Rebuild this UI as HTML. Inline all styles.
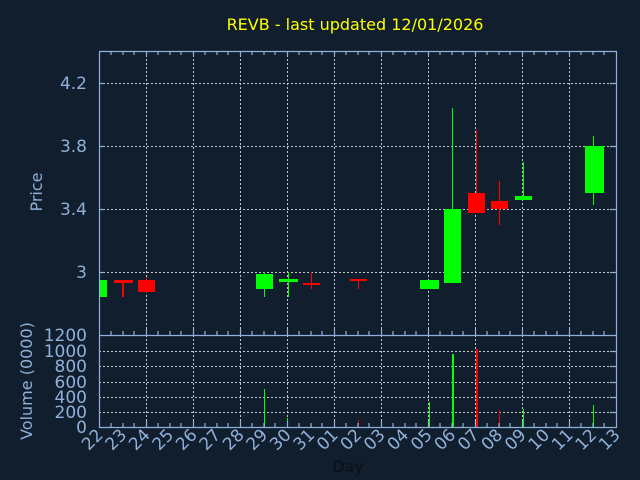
<!DOCTYPE html>
<html><head><meta charset="utf-8"><style>
html,body{margin:0;padding:0;background:#111e2e;}
svg{display:block}
text{font-family:"DejaVu Sans","Liberation Sans",sans-serif;}
</style></head><body>
<svg width="640" height="480" viewBox="0 0 640 480" xmlns="http://www.w3.org/2000/svg">
<rect width="640" height="480" fill="#111e2e"/>
<text x="355" y="30" fill="#ffff00" font-size="16" text-anchor="middle">REVB - last updated 12/01/2026</text>
<g stroke="#c8c8c8" stroke-width="1" stroke-dasharray="2,2" fill="none">
<path d="M146.5 51V427M193.5 51V427M240.5 51V427M287.5 51V427M334.5 51V427M381.5 51V427M428.5 51V427M475.5 51V427M522.5 51V427M569.5 51V427"/>
<path d="M99 83.5H616M99 146.5H616M99 209.5H616M99 272.5H616"/>
<path d="M99 351.5H616M99 366.5H616M99 382.5H616M99 397.5H616M99 412.5H616"/>
</g>
<g>
<rect x="99" y="280" width="8" height="17" fill="#00ff00"/>
<rect x="122" y="280" width="2" height="17" fill="#ff0000"/><rect x="114" y="280" width="19" height="3" fill="#ff0000"/>
<rect x="146" y="277" width="1" height="16" fill="#ff0000"/><rect x="138" y="280" width="17" height="12" fill="#ff0000"/>
<rect x="264" y="272" width="1" height="25" fill="#00ff00"/><rect x="256" y="274" width="17" height="15" fill="#00ff00"/>
<rect x="288" y="272" width="1" height="25" fill="#00ff00"/><rect x="279" y="279" width="19" height="3" fill="#00ff00"/>
<rect x="311" y="272" width="1" height="17" fill="#ff0000"/><rect x="303" y="283" width="17" height="2" fill="#ff0000"/>
<rect x="358" y="279" width="1" height="10" fill="#ff0000"/><rect x="350" y="279" width="17" height="2" fill="#ff0000"/>
<rect x="420" y="280" width="19" height="9" fill="#00ff00"/>
<rect x="452" y="108" width="1" height="175" fill="#00ff00"/><rect x="444" y="209" width="17" height="74" fill="#00ff00"/>
<rect x="476" y="130" width="1" height="83" fill="#ff0000"/><rect x="468" y="193" width="17" height="20" fill="#ff0000"/>
<rect x="499" y="181" width="1" height="44" fill="#ff0000"/><rect x="491" y="201" width="17" height="8" fill="#ff0000"/>
<rect x="523" y="162" width="1" height="38" fill="#00ff00"/><rect x="515" y="196" width="17" height="4" fill="#00ff00"/>
<rect x="593" y="136" width="1" height="69" fill="#00ff00"/><rect x="585" y="146" width="19" height="47" fill="#00ff00"/>
</g>
<g>
<rect x="123" y="425" width="1" height="2" fill="#ff0000"/>
<rect x="146" y="423" width="1" height="4" fill="#ff0000"/>
<rect x="264" y="389" width="1" height="38" fill="#00ff00"/>
<rect x="287" y="418" width="1" height="9" fill="#00ff00"/>
<rect x="311" y="425" width="1" height="2" fill="#ff0000"/>
<rect x="358" y="420" width="1" height="7" fill="#ff0000"/>
<rect x="429" y="402" width="1" height="25" fill="#00ff00"/>
<rect x="452" y="354" width="2" height="73" fill="#00ff00"/>
<rect x="476" y="349" width="2" height="78" fill="#ff0000"/>
<rect x="499" y="410" width="1" height="17" fill="#ff0000"/>
<rect x="523" y="409" width="1" height="18" fill="#00ff00"/>
<rect x="593" y="405" width="1" height="22" fill="#00ff00"/>
</g>
<g stroke="#8fb0d8" stroke-width="1.2" fill="none">
<path d="M99.5 51.5H616.5V427.5H99.5Z"/>
<path d="M99.5 335.5H616.5"/>
<path d="M111 51v4M123 51v4M134 51v4M146.5 51v6M158 51v4M170 51v4M181 51v4M193.5 51v6M205 51v4M217 51v4M228 51v4M240.5 51v6M252 51v4M264 51v4M275 51v4M287.5 51v6M299 51v4M311 51v4M322 51v4M334.5 51v6M346 51v4M358 51v4M369 51v4M381.5 51v6M393 51v4M405 51v4M416 51v4M428.5 51v6M440 51v4M452 51v4M463 51v4M475.5 51v6M487 51v4M499 51v4M510 51v4M522.5 51v6M534 51v4M546 51v4M557 51v4M569.5 51v6M581 51v4M593 51v4M604 51v4"/>
<path d="M111 335v-4M123 335v-4M134 335v-4M146.5 335v-6M158 335v-4M170 335v-4M181 335v-4M193.5 335v-6M205 335v-4M217 335v-4M228 335v-4M240.5 335v-6M252 335v-4M264 335v-4M275 335v-4M287.5 335v-6M299 335v-4M311 335v-4M322 335v-4M334.5 335v-6M346 335v-4M358 335v-4M369 335v-4M381.5 335v-6M393 335v-4M405 335v-4M416 335v-4M428.5 335v-6M440 335v-4M452 335v-4M463 335v-4M475.5 335v-6M487 335v-4M499 335v-4M510 335v-4M522.5 335v-6M534 335v-4M546 335v-4M557 335v-4M569.5 335v-6M581 335v-4M593 335v-4M604 335v-4"/>
<path d="M111 427v-4M123 427v-4M134 427v-4M146.5 427v-6M158 427v-4M170 427v-4M181 427v-4M193.5 427v-6M205 427v-4M217 427v-4M228 427v-4M240.5 427v-6M252 427v-4M264 427v-4M275 427v-4M287.5 427v-6M299 427v-4M311 427v-4M322 427v-4M334.5 427v-6M346 427v-4M358 427v-4M369 427v-4M381.5 427v-6M393 427v-4M405 427v-4M416 427v-4M428.5 427v-6M440 427v-4M452 427v-4M463 427v-4M475.5 427v-6M487 427v-4M499 427v-4M510 427v-4M522.5 427v-6M534 427v-4M546 427v-4M557 427v-4M569.5 427v-6M581 427v-4M593 427v-4M604 427v-4"/>
<path d="M99 83.5h6M99 146.5h6M99 209.5h6M99 272.5h6M616 83.5h-6M616 146.5h-6M616 209.5h-6M616 272.5h-6"/>
<path d="M616 351.5h-6M616 366.5h-6M616 382.5h-6M616 397.5h-6M616 412.5h-6"/>
</g>
<g fill="#8fb0d8" font-size="17" text-anchor="end">
<text x="87" y="89">4.2</text>
<text x="87" y="152">3.8</text>
<text x="87" y="215">3.4</text>
<text x="87" y="278">3</text>
<text x="87" y="341">1200</text>
<text x="87" y="357">1000</text>
<text x="87" y="372">800</text>
<text x="87" y="388">600</text>
<text x="87" y="403">400</text>
<text x="87" y="418">200</text>
<text x="87" y="433">0</text>
</g>
<text transform="translate(42 192) rotate(-90)" fill="#8fb0d8" font-size="16" text-anchor="middle">Price</text>
<text transform="translate(32 381) rotate(-90)" fill="#8fb0d8" font-size="16" text-anchor="middle">Volume (0000)</text>
<g fill="#8fb0d8" font-size="17" text-anchor="end">
<text transform="translate(104 436) rotate(-45)">22</text>
<text transform="translate(127.5 436) rotate(-45)">23</text>
<text transform="translate(151 436) rotate(-45)">24</text>
<text transform="translate(174.5 436) rotate(-45)">25</text>
<text transform="translate(198 436) rotate(-45)">26</text>
<text transform="translate(221.5 436) rotate(-45)">27</text>
<text transform="translate(245 436) rotate(-45)">28</text>
<text transform="translate(268.5 436) rotate(-45)">29</text>
<text transform="translate(292 436) rotate(-45)">30</text>
<text transform="translate(315.5 436) rotate(-45)">31</text>
<text transform="translate(339 436) rotate(-45)">01</text>
<text transform="translate(362.5 436) rotate(-45)">02</text>
<text transform="translate(386 436) rotate(-45)">03</text>
<text transform="translate(409.5 436) rotate(-45)">04</text>
<text transform="translate(433 436) rotate(-45)">05</text>
<text transform="translate(456.5 436) rotate(-45)">06</text>
<text transform="translate(480 436) rotate(-45)">07</text>
<text transform="translate(503.5 436) rotate(-45)">08</text>
<text transform="translate(527 436) rotate(-45)">09</text>
<text transform="translate(550.5 436) rotate(-45)">10</text>
<text transform="translate(574 436) rotate(-45)">11</text>
<text transform="translate(597.5 436) rotate(-45)">12</text>
<text transform="translate(621 436) rotate(-45)">13</text>
</g>
<text x="348" y="472" fill="#0a0f16" font-size="16" text-anchor="middle">Day</text>
</svg>
</body></html>
